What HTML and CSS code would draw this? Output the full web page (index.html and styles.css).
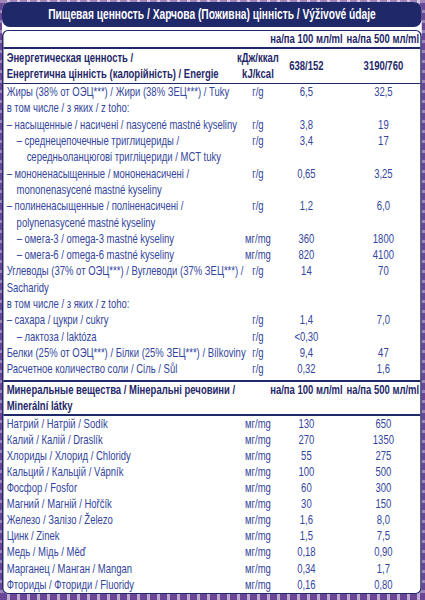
FILE: index.html
```html
<!DOCTYPE html>
<html lang="ru">
<head>
<meta charset="utf-8">
<title>Пищевая ценность</title>
<link rel="stylesheet" href="styles.css">
</head>
<body>
<div class="sheet">
<div class="label">
  <div class="title">Пищевая ценность / Харчова (Поживна) цінність / Výživové údaje</div>
  <div class="box">
    <div class="colhead">
      <span class="h1">на/па 100 мл/ml</span>
      <span class="h2">на/па 500 мл/ml</span>
    </div>
    <div class="row energy">
      <div class="name">Энергетическая ценность /<br>Енергетична цінність (калорійність) / Energie</div>
      <div class="u unit2"><span>кДж/ккал</span><span>kJ/kcal</span></div>
      <div class="a">638/152</div>
      <div class="b">3190/760</div>
    </div>
    <div class="section nutrients">
      <div class="row"><div class="name">Жиры (38% от ОЭЦ***) / Жири (38% ЗЕЦ***) / Tuky</div><div class="u">г/g</div><div class="a">6,5</div><div class="b">32,5</div></div>
      <div class="row"><div class="name">в том числе / з яких / z toho:</div></div>
      <div class="row"><div class="name l0">– насыщенные / насичені / nasycené mastné kyseliny</div><div class="u">г/g</div><div class="a">3,8</div><div class="b">19</div></div>
      <div class="row"><div class="name l1">– среднецепочечные триглицериды /<br>середньоланцюгові тригліцериди / MCT tuky</div><div class="u">г/g</div><div class="a">3,4</div><div class="b">17</div></div>
      <div class="row"><div class="name l0">– мононенасыщенные / мононенасичені /<br>mononenasycené mastné kyseliny</div><div class="u">г/g</div><div class="a">0,65</div><div class="b">3,25</div></div>
      <div class="row"><div class="name l0">– полиненасыщенные / поліненасичені /<br>polynenasycené mastné kyseliny</div><div class="u">г/g</div><div class="a">1,2</div><div class="b">6,0</div></div>
      <div class="row"><div class="name l1">– омега-3 / omega-3 mastné kyseliny</div><div class="u">мг/mg</div><div class="a">360</div><div class="b">1800</div></div>
      <div class="row"><div class="name l1">– омега-6 / omega-6 mastné kyseliny</div><div class="u">мг/mg</div><div class="a">820</div><div class="b">4100</div></div>
      <div class="row"><div class="name">Углеводы (37% от ОЭЦ***) / Вуглеводи (37% ЗЕЦ***) /<br>Sacharidy</div><div class="u">г/g</div><div class="a">14</div><div class="b">70</div></div>
      <div class="row"><div class="name">в том числе / з яких / z toho:</div></div>
      <div class="row"><div class="name l0">– сахара / цукри / cukry</div><div class="u">г/g</div><div class="a">1,4</div><div class="b">7,0</div></div>
      <div class="row"><div class="name l1">– лактоза / laktóza</div><div class="u">г/g</div><div class="a">&lt;0,30</div><div class="b"></div></div>
      <div class="row"><div class="name">Белки (25% от ОЭЦ***) / Білки (25% ЗЕЦ***) / Bílkoviny</div><div class="u">г/g</div><div class="a">9,4</div><div class="b">47</div></div>
      <div class="row"><div class="name">Расчетное количество соли / Сіль / Sůl</div><div class="u">г/g</div><div class="a">0,32</div><div class="b">1,6</div></div>
    </div>
    <div class="minhead">
      <div class="name">Минеральные вещества / Мінеральні речовини /<br>Minerální látky</div>
      <span class="h1">на/па 100 мл/ml</span>
      <span class="h2">на/па 500 мл/ml</span>
    </div>
    <div class="section minerals">
      <div class="row"><div class="name">Натрий / Натрій / Sodík</div><div class="u">мг/mg</div><div class="a">130</div><div class="b">650</div></div>
      <div class="row"><div class="name">Калий / Калій / Draslík</div><div class="u">мг/mg</div><div class="a">270</div><div class="b">1350</div></div>
      <div class="row"><div class="name">Хлориды / Хлорид / Chloridy</div><div class="u">мг/mg</div><div class="a">55</div><div class="b">275</div></div>
      <div class="row"><div class="name">Кальций / Кальцій / Vápník</div><div class="u">мг/mg</div><div class="a">100</div><div class="b">500</div></div>
      <div class="row"><div class="name">Фосфор / Fosfor</div><div class="u">мг/mg</div><div class="a">60</div><div class="b">300</div></div>
      <div class="row"><div class="name">Магний / Магній / Hořčík</div><div class="u">мг/mg</div><div class="a">30</div><div class="b">150</div></div>
      <div class="row"><div class="name">Железо / Залізо / Železo</div><div class="u">мг/mg</div><div class="a">1,6</div><div class="b">8,0</div></div>
      <div class="row"><div class="name">Цинк / Zinek</div><div class="u">мг/mg</div><div class="a">1,5</div><div class="b">7,5</div></div>
      <div class="row"><div class="name">Медь / Мідь / Měď</div><div class="u">мг/mg</div><div class="a">0,18</div><div class="b">0,90</div></div>
      <div class="row"><div class="name">Марганец / Манган / Mangan</div><div class="u">мг/mg</div><div class="a">0,34</div><div class="b">1,7</div></div>
      <div class="row"><div class="name">Фториды / Фториди / Fluoridy</div><div class="u">мг/mg</div><div class="a">0,16</div><div class="b">0,80</div></div>
    </div>
  </div>
</div>
</div>
</body>
</html>
```

FILE: styles.css
```css
html, body {
  margin: 0;
  padding: 0;
  overflow: hidden;
}

body {
  font-family: "Liberation Sans", Arial, sans-serif;
}

.sheet {
  width: 425px;
  height: 600px;
  overflow: hidden;
  background-color: #6b4696;
  background-image:
    repeating-linear-gradient(90deg, transparent 0 7px, rgba(255,255,255,0.55) 7px 10px),
    repeating-linear-gradient(0deg, transparent 0 7px, rgba(255,255,255,0.35) 7px 10px);
}

/* the label is laid out wide, then condensed horizontally like the printed narrow typeface */
.label {
  width: 575.3px;
  margin: 2px 0 0 2px;
  transform: scaleX(0.73);
  transform-origin: 0 0;
  background: #fff;
  border-radius: 11px 11px 8.2px 8.2px / 8px 8px 6px 6px;
}

.title {
  height: 25px;
  line-height: 25px;
  background: #1f2869;
  color: #fff;
  font-weight: 700;
  font-size: 14px;
  text-align: center;
  white-space: nowrap;
  border-radius: 11px / 8px;
  margin-bottom: 3px;
}

.box {
  border: 1.8px solid #1f2869;
  border-left-width: 2.5px;
  border-right-width: 2.5px;
  border-radius: 8.2px / 6px;
  padding: 0 2.9px 0 4.35px;
  color: #33459c;
  font-size: 13px;
}

.colhead {
  display: flex;
  justify-content: flex-end;
  height: 16.2px;
  line-height: 16.2px;
  border-bottom: 2px solid #1f2869;
  margin: 0 -2.9px 0 -4.35px;
  padding-right: 2.9px;
}

.h1, .h2 {
  display: flex;
  justify-content: center;
  white-space: nowrap;
  font-weight: 700;
  color: #1f2869;
}

.h1 { width: 98.6px; margin-right: 6.8px; }
.h2 { width: 97.3px; }

.row {
  display: grid;
  grid-template-columns: minmax(0, 1fr) 39.7px 8.2px 76.7px 19.2px 95.9px;
  line-height: 16.3px;
}

.name {
  grid-column: 1;
  white-space: nowrap;
}

.l0 { padding-left: 13.7px; text-indent: -13.7px; }
.l1 { padding-left: 27.4px; text-indent: -13.7px; }

.u, .a, .b {
  display: flex;
  justify-content: center;
  white-space: nowrap;
}
.u { grid-column: 2; }
.a { grid-column: 4; }
.b { grid-column: 6; }

.energy {
  align-items: center;
  line-height: 16px;
  height: 34px;
  font-weight: 700;
  color: #1f2869;
  border-bottom: 1.5px solid #1f2869;
  margin: 0 -2.9px 0 -4.35px;
  padding: 0 2.9px 0 4.35px;
}

.unit2 {
  flex-direction: column;
  align-items: center;
}

.nutrients {
  padding: 0 0 2.2px;
}

.minhead {
  display: flex;
  align-items: flex-start;
  line-height: 16px;
  font-weight: 700;
  color: #1f2869;
  border-top: 2px solid #1f2869;
  border-bottom: 2px solid #1f2869;
  margin: 0 -2.9px 0 -4.35px;
  padding: 0 2.9px 0 4.35px;
}

.minhead .name { flex: 1; }

.minerals .row {
  line-height: 16.1px;
}
```
